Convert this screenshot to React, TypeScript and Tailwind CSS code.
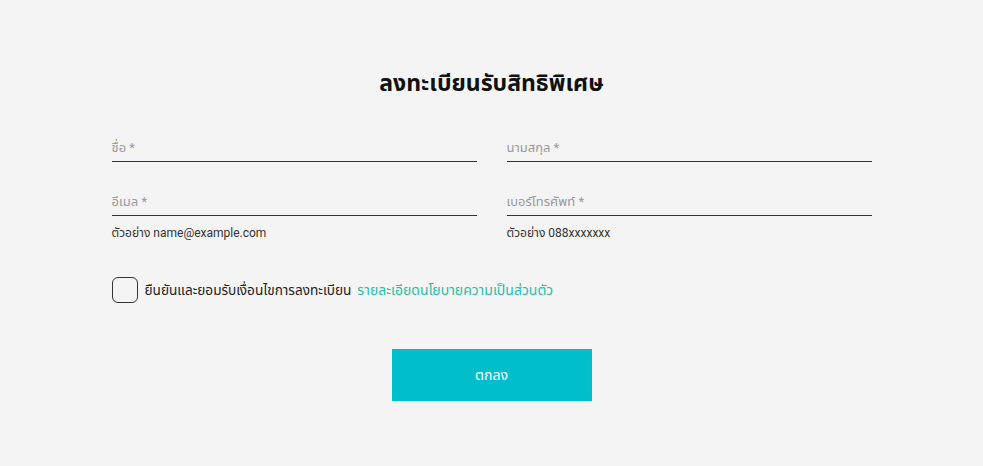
import React from 'react';

const Field: React.FC<{ label: string; hint?: string }> = ({ label, hint }) => (
  <div className="flex flex-col">
    <label className="h-[31px] flex items-end pb-[7px] border-b border-[#333333] text-[13px] leading-none text-[#9a9a9a]">
      {label}
    </label>
    {hint ? (
      <div className="mt-[9px] text-[12px] leading-[16px] text-[#333333]">{hint}</div>
    ) : null}
  </div>
);

export default function App() {
  return (
    <div
      className="w-full h-[466px] bg-[#f4f4f4] flex flex-col items-center"
      style={{ fontFamily: 'Roboto, "Noto Sans Thai", "Noto Sans", "Liberation Sans", sans-serif' }}
    >
      <h1 className="mt-[68px] text-[23px] leading-[32px] font-bold text-[#111111]">ลงทะเบียนรับสิทธิพิเศษ</h1>

      <form className="w-[760px] mt-[31px] grid grid-cols-2 gap-x-[30px]">
        <Field label="ชื่อ *" />
        <Field label="นามสกุล *" />
        <div className="mt-[23px]">
          <Field label="อีเมล *" hint="ตัวอย่าง name@example.com" />
        </div>
        <div className="mt-[23px]">
          <Field label="เบอร์โทรศัพท์ *" hint="ตัวอย่าง 088xxxxxxx" />
        </div>
      </form>

      <div className="w-[760px] mt-[36px] flex items-center">
        <span className="w-[26px] h-[26px] rounded-[6px] border border-[#333333] bg-[#f4f4f4]" />
        <span className="ml-[7px] text-[13.6px] text-[#222222]">ยืนยันและยอมรับเงื่อนไขการลงทะเบียน</span>
        <a className="ml-[6px] text-[14px] text-[#27bfa6]">รายละเอียดนโยบายความเป็นส่วนตัว</a>
      </div>

      <button
        type="button"
        className="mt-[46px] w-[200px] h-[52px] bg-[#00becc] text-white text-[14px]"
      >
        ตกลง
      </button>
    </div>
  );
}
